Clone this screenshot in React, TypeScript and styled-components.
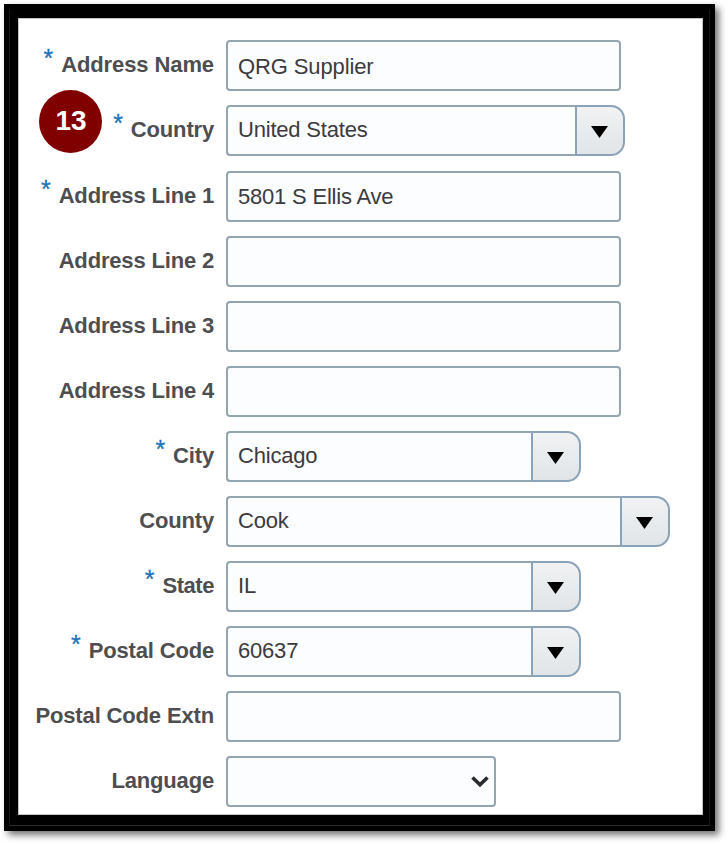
import React from "react";
import styled, { createGlobalStyle } from "styled-components";

const Global = createGlobalStyle`
  * { box-sizing: border-box; }
  body { margin: 0; background: #fff; overflow: hidden; }
`;

const Page = styled.main`
  width: 728px;
  height: 844px;
  padding: 4px;
  font-family: "Liberation Sans", Arial, sans-serif;
`;

const Frame = styled.div`
  width: 711px;
  height: 827px;
  padding: 5px;
  background: #000;
  box-shadow: 4px 4px 7px rgba(0, 0, 0, 0.55);
`;

const Bevel = styled.div`
  width: 701px;
  height: 817px;
  padding: 8px;
  border: 1px solid #181818;
  border-top-color: #000;
  border-bottom-color: #2c2c2c;
`;

const Form = styled.form`
  position: relative;
  display: grid;
  grid-auto-rows: 65.1px;
  align-content: start;
  width: 685px;
  height: 797px;
  padding-top: 22.4px;
  background: #fff;
  box-shadow: inset 0 0 0 1px #c4c4c4;
  overflow: hidden;
`;

const Row = styled.div`
  display: grid;
  grid-template-columns: 196px 1fr;
  column-gap: 12px;
  align-items: start;
`;

const Label = styled.label<{ $spacing: number }>`
  display: flex;
  justify-content: flex-end;
  gap: 8px;
  padding-top: 12px;
  font-size: 22px;
  font-weight: 700;
  line-height: 26px;
  letter-spacing: ${(p) => p.$spacing}px;
  color: #4e4e50;
  white-space: nowrap;
`;

const Required = styled.span`
  height: 20px;
  margin-top: -4px;
  font-size: 25px;
  font-weight: 400;
  line-height: 20px;
  letter-spacing: 0;
  color: #2273b5;
  -webkit-text-stroke: 0.3px #2273b5;
`;

const Control = styled.div<{ $width: number }>`
  display: flex;
  width: ${(p) => p.$width}px;
  height: 51px;
`;

const Field = styled.div<{ $plain?: boolean; $joined?: boolean; $spacing: number }>`
  display: flex;
  flex: 1;
  align-items: flex-start;
  justify-content: space-between;
  padding: ${(p) => (p.$plain ? 11.5 : 10)}px 5px 0 10px;
  border: 2px solid #92a5b1;
  border-right-width: ${(p) => (p.$joined ? 0 : 2)}px;
  border-radius: ${(p) => (p.$joined ? "4px 0 0 4px" : "4px")};
  background: #fbfdff;
  color: #3c3a3e;
  font-size: 22px;
  line-height: 26px;
  letter-spacing: ${(p) => p.$spacing}px;
  white-space: nowrap;
`;

const DropButton = styled.button`
  display: flex;
  align-items: center;
  justify-content: center;
  width: 50.5px;
  height: 51px;
  padding: 3px 1px 0 0;
  border: 2px solid #8ba3b8;
  border-radius: 0 14px 14px 0;
  background: linear-gradient(#f0f2f3, #e1e5e8);
`;

const Chevron = styled.svg`
  margin-top: 7px;
`;

const Step = styled.div`
  position: absolute;
  left: 21px;
  top: 72px;
  display: grid;
  place-items: center;
  width: 63px;
  height: 63px;
  padding: 0 0 1px 1px;
  border-radius: 50%;
  background: #800000;
  color: #fff;
  font-size: 28px;
  font-weight: 700;
  line-height: 32px;
`;

type Item = {
  label: string;
  value?: string;
  required?: boolean;
  kind: "text" | "combo" | "select";
  width: number;
  labelSpacing?: number;
  valueSpacing?: number;
};

const items: Item[] = [
  { label: "Address Name", value: "QRG Supplier", required: true, kind: "text", width: 395, labelSpacing: -0.1, valueSpacing: -0.12 },
  { label: "Country", value: "United States", required: true, kind: "combo", width: 399 },
  { label: "Address Line 1", value: "5801 S Ellis Ave", required: true, kind: "text", width: 395 },
  { label: "Address Line 2", kind: "text", width: 395 },
  { label: "Address Line 3", kind: "text", width: 395 },
  { label: "Address Line 4", kind: "text", width: 395 },
  { label: "City", value: "Chicago", required: true, kind: "combo", width: 355 },
  { label: "County", value: "Cook", kind: "combo", width: 444 },
  { label: "State", value: "IL", required: true, kind: "combo", width: 355, labelSpacing: -0.45 },
  { label: "Postal Code", value: "60637", required: true, kind: "combo", width: 355 },
  { label: "Postal Code Extn", kind: "text", width: 395, labelSpacing: -0.15 },
  { label: "Language", kind: "select", width: 270 },
];

export default function App() {
  return (
    <Page>
      <Global />
      <Frame>
        <Bevel>
          <Form>
            {items.map((item) => (
              <Row key={item.label}>
                <Label $spacing={item.labelSpacing ?? -0.17}>
                  {item.required && <Required>*</Required>}
                  <span>{item.label}</span>
                </Label>
                <Control $width={item.width}>
                  <Field $plain={item.kind === "text"} $joined={item.kind === "combo"} $spacing={item.valueSpacing ?? -0.2}>
                    <span>{item.value}</span>
                    {item.kind === "select" && (
                      <Chevron width="18" height="13" viewBox="0 0 18 13">
                        <path d="M1.5 2.5 9 9.7 16.5 2.5" fill="none" stroke="#2b2b2b" strokeWidth="3.6" />
                      </Chevron>
                    )}
                  </Field>
                  {item.kind === "combo" && (
                    <DropButton type="button" aria-label={item.label}>
                      <svg width="17" height="12" viewBox="0 0 17 12">
                        <path d="M0 0H17L8.5 12Z" fill="#000" />
                      </svg>
                    </DropButton>
                  )}
                </Control>
              </Row>
            ))}
            <Step>13</Step>
          </Form>
        </Bevel>
      </Frame>
    </Page>
  );
}
